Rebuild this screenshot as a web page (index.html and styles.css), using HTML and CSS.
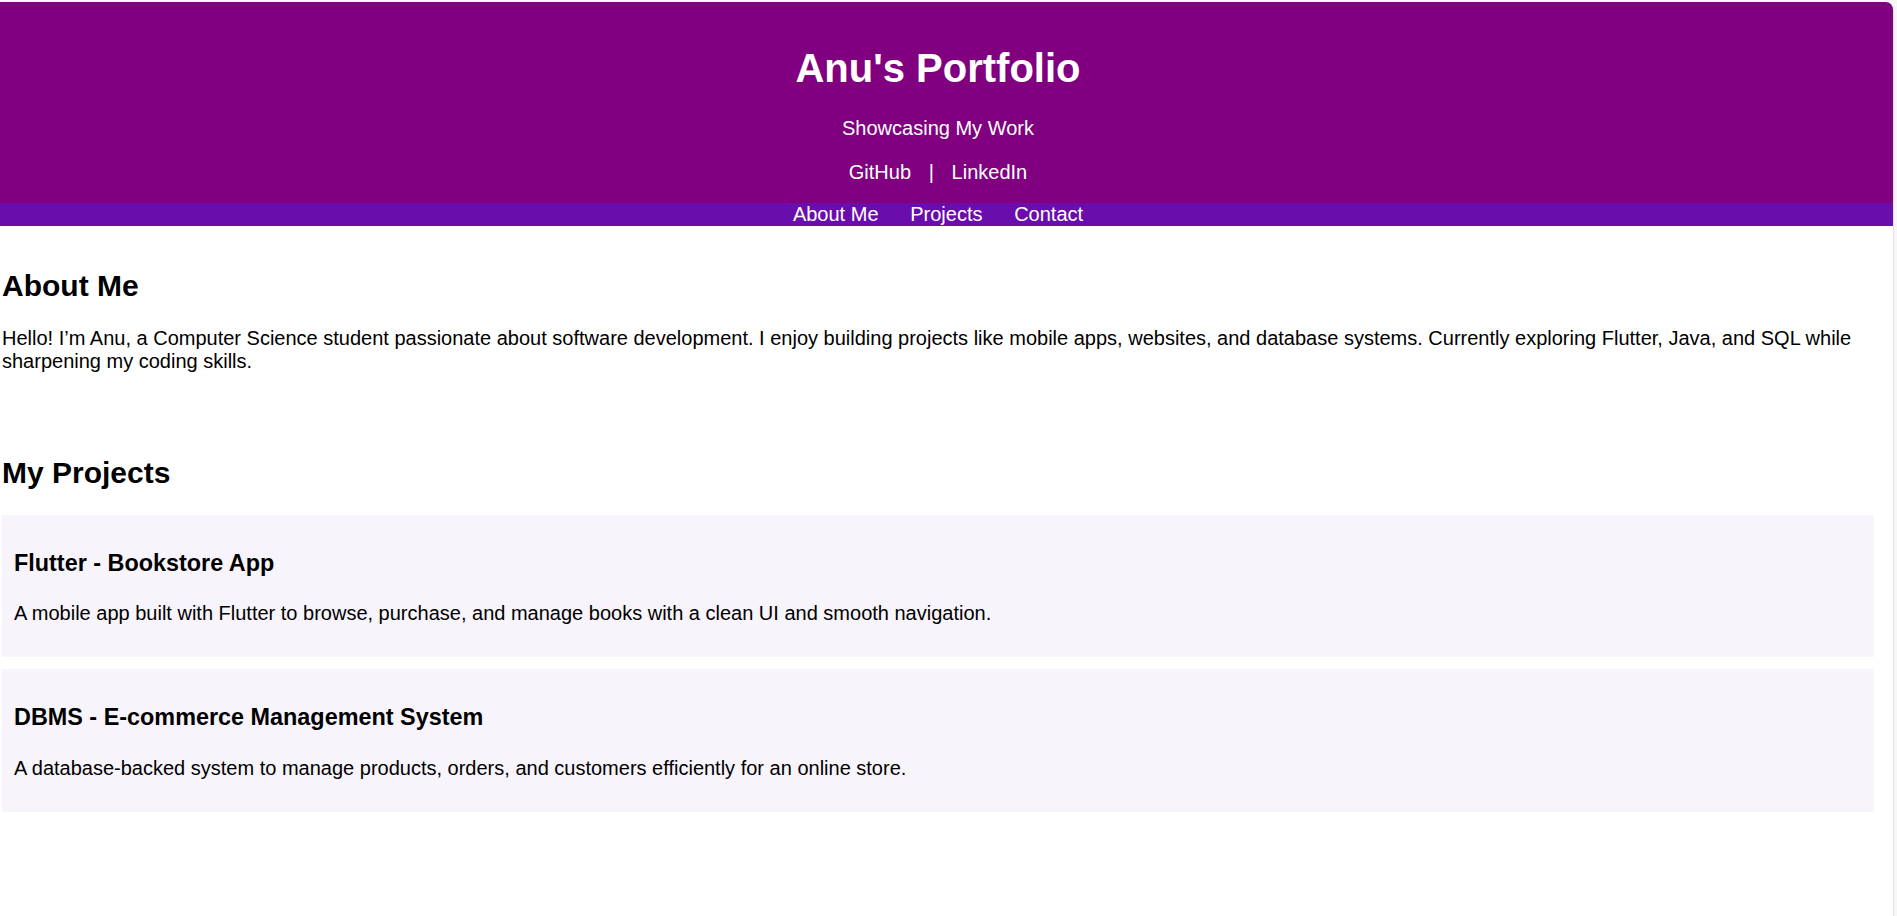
FILE: index.html
```html
<!DOCTYPE html>
<html lang="en">
<head>
<meta charset="utf-8">
<title>Anu's Portfolio</title>
<link rel="stylesheet" href="styles.css">
</head>
<body>
<div class="page">
  <header class="hero">
    <h1 class="hero-title">Anu's Portfolio</h1>
    <p class="tagline">Showcasing My Work</p>
    <p class="social"><a class="social-link" href="#">GitHub</a><span class="sep">|</span><a class="social-link" href="#">LinkedIn</a></p>
  </header>
  <nav class="nav">
    <a class="nav-link" href="#about">About Me</a>
    <a class="nav-link" href="#projects">Projects</a>
    <a class="nav-link" href="#contact">Contact</a>
  </nav>
  <main class="content">
    <section class="section" id="about">
      <h2 class="section-title">About Me</h2>
      <p class="text">Hello! I’m Anu, a Computer Science student passionate about software development. I enjoy building projects like mobile apps, websites, and database systems. Currently exploring Flutter, Java, and SQL while sharpening my coding skills.</p>
    </section>
    <section class="section" id="projects">
      <h2 class="section-title projects-title">My Projects</h2>
      <div class="card">
        <h3 class="card-title">Flutter - Bookstore App</h3>
        <p class="card-text">A mobile app built with Flutter to browse, purchase, and manage books with a clean UI and smooth navigation.</p>
      </div>
      <div class="card">
        <h3 class="card-title">DBMS - E-commerce Management System</h3>
        <p class="card-text">A database-backed system to manage products, orders, and customers efficiently for an online store.</p>
      </div>
    </section>
  </main>
</div>
</body>
</html>
```
FILE: styles.css
```css
html, body {
  margin: 0;
  padding: 0;
}

body {
  background: #f7f7f7;
  font-family: "Liberation Sans", Arial, sans-serif;
  font-size: 20px;
  line-height: normal;
  color: #000;
}

.page {
  margin-top: 2px;
  width: 1893px;
  min-height: calc(100vh - 2px);
  background: #fff;
  border-right: 1px solid #e1e1e1;
  border-top-right-radius: 8px;
  overflow: hidden;
}

.hero {
  background: #800080;
  color: #fff;
  text-align: center;
  padding: 18px 19px 18.7px 2px;
}

.hero-title {
  font-size: 40px;
  font-weight: bold;
  margin: 26.4px 0 25.9px;
}

.tagline {
  margin: 0;
}

.social {
  margin: 21px 0 0;
  display: flex;
  justify-content: center;
  gap: 17.7px;
}

.social-link {
  color: #fff;
  text-decoration: none;
}

.nav {
  background: #6a0dad;
  display: flex;
  justify-content: center;
  gap: 31.7px;
  padding: 0 19px 0 2px;
}

.nav-link {
  color: #fff;
  text-decoration: none;
}

.content {
  padding: 0 19px 0 2px;
}

.section {
  padding: 19px 0;
}

.section-title {
  font-size: 30px;
  font-weight: bold;
  margin: 24.2px 0;
}

.projects-title {
  margin-bottom: 25.5px;
}

.text {
  margin: 20px 0;
}

.card {
  background: #f7f4fb;
  padding: 11.5px 12px 12.1px;
  margin-bottom: 12px;
}

.card-title {
  font-size: 23.4px;
  font-weight: bold;
  margin: 23.5px 0 25.2px;
}

.card-text {
  margin: 0 0 20px;
}
```
